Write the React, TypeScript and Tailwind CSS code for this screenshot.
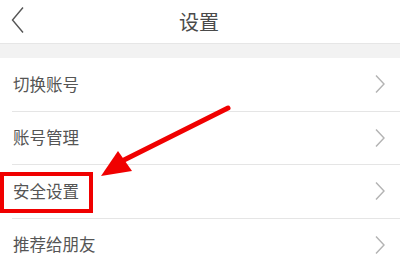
import { ReactNode } from "react";

const items = ["切换账号", "账号管理", "安全设置", "推荐给朋友"];

function Chevron({ children }: { children?: ReactNode }) {
  return (
    <svg width="12" height="20" viewBox="0 0 12 20" className="shrink-0">
      <path d="M2 1.5 L10 10 L2 18.5" fill="none" stroke="#b3b3b3" strokeWidth="1.4" />
      {children}
    </svg>
  );
}

export default function App() {
  return (
    <div
      className="relative w-[400px] h-[269px] overflow-hidden bg-white"
      style={{ fontFamily: '"Noto Sans CJK SC", "Noto Sans", sans-serif' }}
    >
      <header className="relative h-[44px] flex items-center justify-center border-b border-[#e6e6e6]">
        <svg width="16" height="28" viewBox="0 0 16 28" className="absolute left-[10px] top-[6px]">
          <path d="M13 1.5 L2.5 14 L13 26.5" fill="none" stroke="#555" strokeWidth="1.4" />
        </svg>
        <h1 className="text-[20px] text-[#4a4a4a] leading-none pr-[2px]">设置</h1>
      </header>
      <div className="h-[14px] bg-[#f2f2f2]" />

      <ul>
        {items.map((name) => (
          <li key={name} className="h-[53.5px] pl-[12px]">
            <div className="h-full flex items-center justify-between pr-[14px] border-b border-[#e5e5e5]">
              <span className="text-[16.5px] text-[#555] pl-[1px]">{name}</span>
              <Chevron />
            </div>
          </li>
        ))}
      </ul>

      {/* red highlight box */}
      <div className="absolute left-[0px] top-[172px] w-[93px] h-[41px] border-[4px] border-[#f00000]" />

      {/* red arrow */}
      <svg width="400" height="269" className="absolute left-0 top-0 pointer-events-none">
        <line x1="228" y1="108" x2="118" y2="163" stroke="#f00000" strokeWidth="5" strokeLinecap="round" />
        <polygon points="101,176 118,151 132,171" fill="#f00000" />
      </svg>
    </div>
  );
}
